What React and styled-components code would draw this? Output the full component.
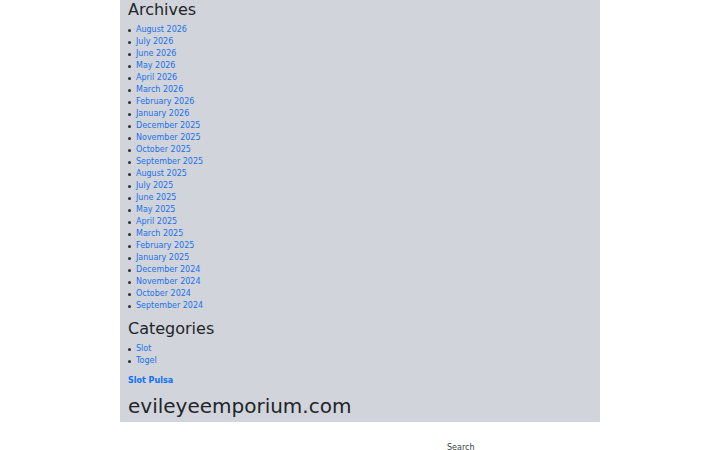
import React from "react";
import styled, { createGlobalStyle } from "styled-components";

const Global = createGlobalStyle`
  html, body { margin: 0; padding: 0; background: #ffffff; }
  body { font-family: "DejaVu Sans", Verdana, sans-serif; color: #212529; }
  * { box-sizing: border-box; }
`;

const Panel = styled.aside`
  width: 480px;
  margin: 0 auto;
  background: #d1d5db;
  padding: 0 8px 4px 8px;
  display: flex;
  flex-direction: column;
`;

const Heading = styled.h2`
  margin: ${(p) => (p.$first ? "0" : "7px")} 0 5px 0;
  font-size: 16px;
  line-height: 19px;
  font-weight: 400;
  color: #212529;
`;

const List = styled.ul`
  margin: 0;
  padding: 0;
  list-style: none;
  font-size: 8px;
  line-height: 12px;
`;

const Item = styled.li`
  display: flex;
  align-items: center;
  &::before {
    content: "";
    flex: none;
    width: 3px;
    height: 3px;
    border-radius: 50%;
    background: #2b3035;
    margin: 1px 5px 0 0;
  }
`;

const Link = styled.a`
  color: #1a6ff0;
  text-decoration: none;
`;

const BoldLink = styled.a`
  display: block;
  margin-top: 7.5px;
  font-size: 8px;
  line-height: 12px;
  font-weight: 700;
  color: #0d6efd;
  text-decoration: none;
`;

const SiteName = styled.div`
  margin-top: 7.5px;
  font-size: 20px;
  line-height: 24px;
  color: #212529;
`;

const SearchRow = styled.div`
  width: 480px;
  margin: 0 auto;
  padding: 20px 0 0 327px;
  font-size: 8px;
  line-height: 12px;
  color: #3a3f44;
`;

const archives = [
  "August 2026", "July 2026", "June 2026", "May 2026", "April 2026", "March 2026",
  "February 2026", "January 2026", "December 2025", "November 2025", "October 2025",
  "September 2025", "August 2025", "July 2025", "June 2025", "May 2025", "April 2025",
  "March 2025", "February 2025", "January 2025", "December 2024", "November 2024",
  "October 2024", "September 2024",
];

export default function App() {
  return (
    <>
      <Global />
      <Panel>
        <Heading $first>Archives</Heading>
        <List>
          {archives.map((a) => (
            <Item key={a}><Link href="#">{a}</Link></Item>
          ))}
        </List>
        <Heading>Categories</Heading>
        <List>
          <Item><Link href="#">Slot</Link></Item>
          <Item><Link href="#">Togel</Link></Item>
        </List>
        <BoldLink href="#">Slot Pulsa</BoldLink>
        <SiteName>evileyeemporium.com</SiteName>
      </Panel>
      <SearchRow>Search</SearchRow>
    </>
  );
}
